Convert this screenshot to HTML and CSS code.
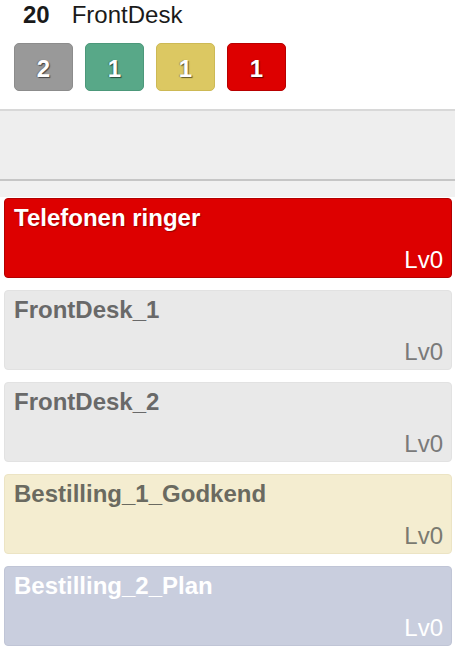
FILE: index.html
```html
<!DOCTYPE html>
<html>
<head>
<meta charset="utf-8">
<link rel="stylesheet" href="styles.css">
</head>
<body>
<div class="header">
  <div class="title"><span class="count">20</span><span class="name">FrontDesk</span></div>
  <div class="badges">
    <div class="badge gray">2</div>
    <div class="badge green">1</div>
    <div class="badge yellow">1</div>
    <div class="badge red">1</div>
  </div>
</div>
<div class="band"></div>
<div class="strip"></div>
<div class="list">
  <div class="card c-red"><div class="ct">Telefonen ringer</div><div class="lv">Lv0</div></div>
  <div class="card c-gray"><div class="ct">FrontDesk_1</div><div class="lv">Lv0</div></div>
  <div class="card c-gray"><div class="ct">FrontDesk_2</div><div class="lv">Lv0</div></div>
  <div class="card c-yellow"><div class="ct">Bestilling_1_Godkend</div><div class="lv">Lv0</div></div>
  <div class="card c-blue"><div class="ct">Bestilling_2_Plan</div><div class="lv">Lv0</div></div>
</div>
</body>
</html>
```
FILE: styles.css
```css
html, body {
  margin: 0;
  padding: 0;
  background: #ffffff;
  font-family: "Liberation Sans", Arial, sans-serif;
  overflow: hidden;
}
.header {
  padding: 1px 0 0 0;
  height: 109px;
  box-sizing: border-box;
}
.title {
  display: flex;
  align-items: baseline;
  font-size: 24px;
  color: #1a1a1a;
  padding-left: 23px;
}
.count {
  font-weight: bold;
  margin-right: 22px;
}
.badges {
  display: flex;
  gap: 12px;
  margin-top: 14px;
  padding-left: 14px;
}
.badge {
  width: 59px;
  height: 48px;
  box-sizing: border-box;
  border-radius: 5px;
  display: flex;
  align-items: center;
  justify-content: center;
  color: #ffffff;
  font-weight: bold;
  font-size: 24px;
  padding-top: 4px;
  text-shadow: 1px 1px 1px rgba(0,0,0,0.55), -1px 0 1px rgba(0,0,0,0.25);
}
.badge.gray { background: #999999; border: 1px solid #8c8c8c; }
.badge.green { background: #58a888; border: 1px solid #4c987a; }
.badge.yellow { background: #dcc862; border: 1px solid #cdb955; }
.badge.red { background: #dd0000; border: 1px solid #b80000; }
.band {
  height: 68px;
  background: #eeeeee;
  border-top: 2px solid #d8d8d8;
  border-bottom: 2px solid #c6c6c6;
}
.strip {
  height: 16px;
  background: #f1f1f1;
}
.list {
  display: flex;
  flex-direction: column;
  gap: 12px;
  padding: 1px 3px 0 4px;
}
.card {
  height: 80px;
  box-sizing: border-box;
  border-radius: 4px;
  padding: 5px 8px 4px 9px;
  display: flex;
  flex-direction: column;
  justify-content: space-between;
  font-size: 24px;
  line-height: 27px;
}
.ct { font-weight: bold; }
.lv { text-align: right; }
.c-red { background: #dd0000; border: 1px solid #b30000; color: #ffffff; }
.c-red .ct { text-shadow: 1px 1px 1px rgba(0,0,0,0.3); }
.c-gray { background: #e9e9e9; border: 1px solid #e2e2e2; color: #696969; }
.c-gray .lv { color: #7a7a7a; }
.c-yellow { background: #f4edd0; border: 1px solid #ece4c4; color: #6a6a60; }
.c-yellow .lv { color: #7a7a70; }
.c-blue { background: #c9cede; border: 1px solid #c0c5d6; color: #ffffff; }
```
